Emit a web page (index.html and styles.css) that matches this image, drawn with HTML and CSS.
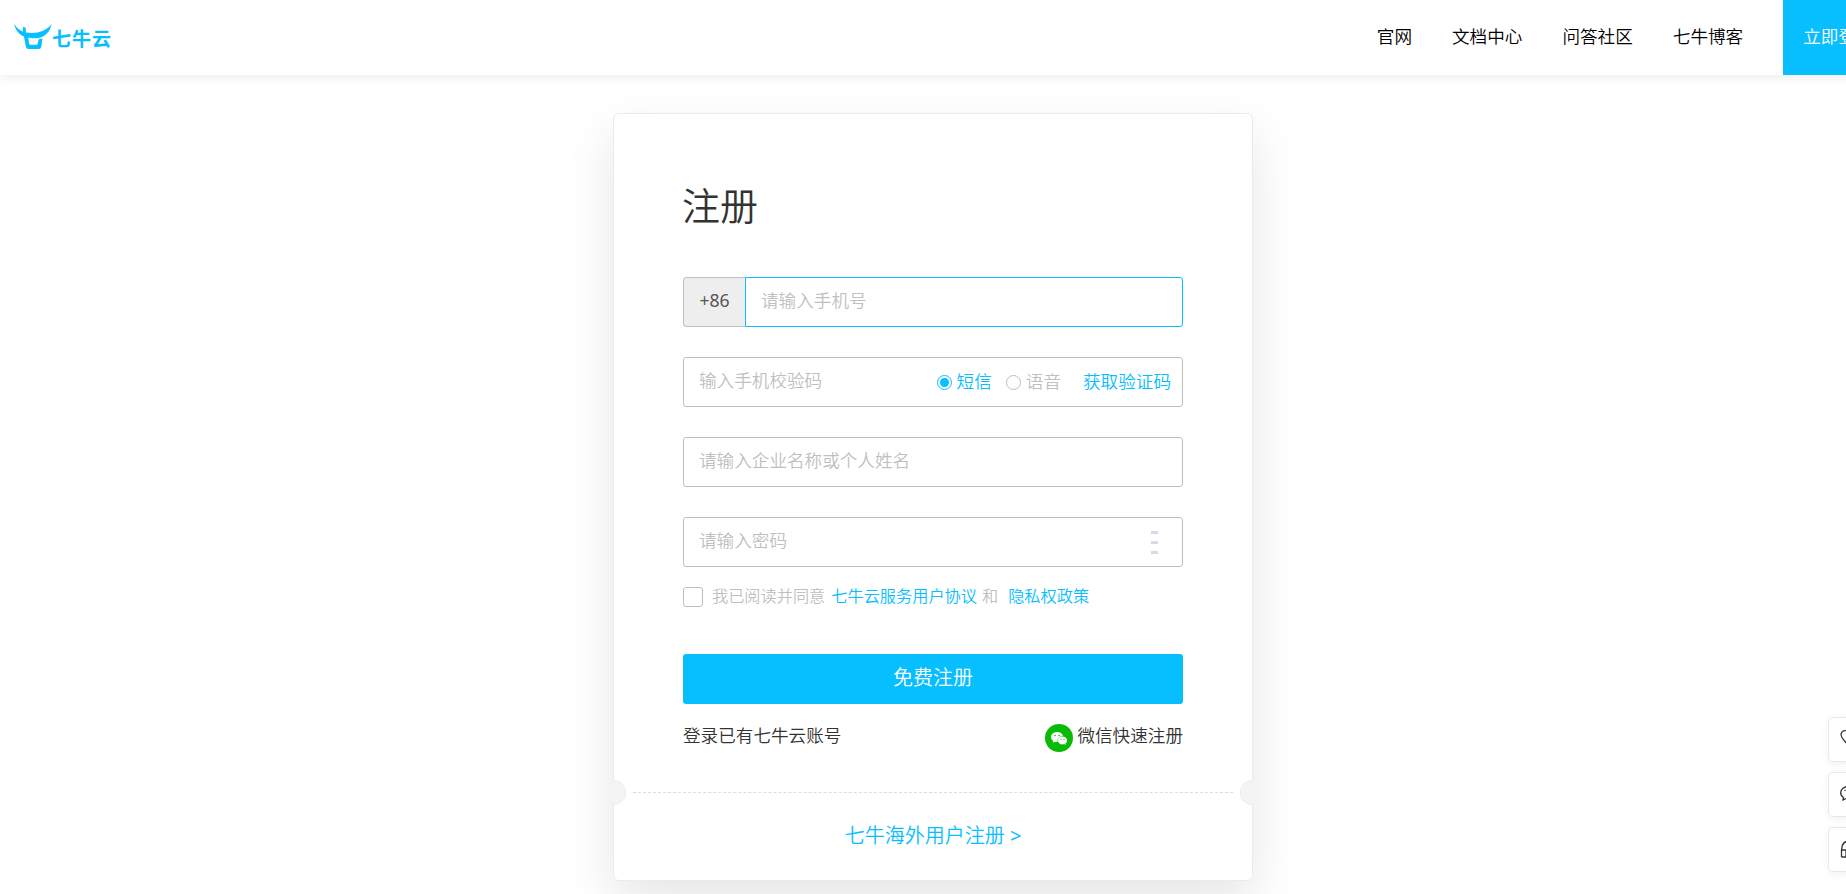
FILE: index.html
```html
<!DOCTYPE html>
<html lang="zh-CN">
<head>
    <meta charset="UTF-8">
    <meta name="viewport" content="width=device-width, initial-scale=1.0">
    <title>注册 - 七牛云</title>
    <link rel="stylesheet" href="styles.css">
</head>
<body>

<!-- Header -->
<header class="header">
    <a class="logo" href="#">
        <svg class="logo-icon" width="38" height="26" viewBox="0 0 38 26">
            <path d="M0 0C3 4 6 6.500 9 7.800L9 3L11.600 3.500L12 8.500C22 10 32 7.500 37.600 0C36 8 31 12.800 24 14C20 14.500 17 14.200 14.200 13.500L15.200 19.500Q15.400 20.700 16.500 20.700H22Q23.500 20.700 23.700 19.500L24.300 16.500Q24.700 14.500 28.500 14.500L27.300 22.500Q26.800 25 24.800 25H14.500Q12.300 25 11.800 22.500L10 12.500C5 10.500 1.500 6 0 0Z"/>
        </svg>
        <span class="logo-text">七牛云</span>
    </a>
    <nav class="nav">
        <a href="#">官网</a>
        <a href="#">文档中心</a>
        <a href="#">问答社区</a>
        <a href="#">七牛博客</a>
        <a class="login-btn" href="#">立即登录</a>
    </nav>
</header>

<!-- Register card -->
<main class="card">
    <form class="form">
        <h1>注册</h1>
        <div class="field phone">
            <span class="prefix">+86</span>
            <input type="text" placeholder="请输入手机号">
        </div>
        <div class="field">
            <input type="text" placeholder="输入手机校验码">
            <label class="radio checked"><i></i><span>短信</span></label>
            <label class="radio"><i></i><span>语音</span></label>
            <a class="get-code" href="#">获取验证码</a>
        </div>
        <div class="field">
            <input type="text" placeholder="请输入企业名称或个人姓名">
        </div>
        <div class="field">
            <input type="password" placeholder="请输入密码">
            <div class="strength"><i></i><i></i><i></i></div>
        </div>
        <div class="agreement">
            <span class="checkbox"></span>
            <span>我已阅读并同意</span>
            <a class="terms" href="#">七牛云服务用户协议</a>
            <span>和</span>
            <a class="privacy" href="#">隐私权政策</a>
        </div>
        <button class="submit" type="button">免费注册</button>
        <div class="links">
            <a href="#">登录已有七牛云账号</a>
            <a class="wechat" href="#">
                <svg width="28" height="28" viewBox="0 0 28 28">
                    <circle cx="14" cy="14" r="14" fill="#09bb07"/>
                    <path fill="#fff" d="M12 8C8.700 8 6 10.200 6 13C6 14.600 6.900 15.900 8.200 16.900L7.700 18.800L9.900 17.700C10.800 18 11.700 18.100 12.600 18C11.900 14.800 14.500 12 18 12C17.500 9.600 15 8 12 8Z"/>
                    <path fill="#fff" d="M22 16.400C22 14.200 19.900 12.500 17.500 12.500C14.900 12.500 12.900 14.200 12.900 16.400C12.900 18.700 14.900 20.400 17.500 20.400C18.100 20.400 18.700 20.300 19.200 20.100L20.900 21L20.400 19.500C21.400 18.700 22 17.600 22 16.400Z"/>
                    <g fill="#09bb07">
                        <circle cx="10" cy="11.500" r=".8"/>
                        <circle cx="14" cy="11.500" r=".8"/>
                        <circle cx="16" cy="15.300" r=".6"/>
                        <circle cx="19" cy="15.300" r=".6"/>
                    </g>
                </svg>
                微信快速注册
            </a>
        </div>
    </form>
    <div class="divider">
        <span class="notch notch-left"></span>
        <span class="dashes"></span>
        <span class="notch notch-right"></span>
    </div>
    <a class="overseas" href="#">七牛海外用户注册 <span>&gt;</span></a>
</main>

<!-- Floating tools -->
<aside class="tools">
    <a href="#">
        <svg width="22" height="22" viewBox="0 0 22 22"><path d="M4.500 12C2 9 .5 7 1.200 4.500C2 2 4.500 1 7 2C9 3 10 4 11 5C12 3 15 1 18 2C21 3 21.500 7 19 10L11 19Z"/></svg>
    </a>
    <a href="#">
        <svg width="22" height="22" viewBox="0 0 22 22"><path d="M16 7C15 4 12 2.500 8.500 2.500C4 2.500 .7 5 .7 8.700C.7 11 1.800 12.500 3.500 13.500L3 16L6 14.700M5 5.700V7M10 5.700V7M8 12A6 5 0 1 0 20 12A6 5 0 1 0 8 12"/></svg>
    </a>
    <a href="#">
        <svg width="22" height="22" viewBox="0 0 22 22"><path d="M1.500 18V11C1.500 5 5 1.500 11 1.500S20.500 5 20.500 11V18H15.500V11H20.500M1.500 11H6V18H1.500"/></svg>
    </a>
</aside>

</body>
</html>
```
FILE: styles.css
```css
* {
    box-sizing: border-box;
    margin: 0;
    padding: 0;
}

html {
    overflow: hidden;
}

body {
    width: 1866px;
    height: 894px;
    overflow: hidden;
    background-color: #fff;
    color: #333;
    font-family: "Noto Sans", "Noto Sans CJK SC", sans-serif;
    font-size: 17.6px;
    font-weight: 350;
}

a {
    color: inherit;
    text-decoration: none;
}

/* Header */
.header {
    display: flex;
    justify-content: space-between;
    height: 75px;
    padding-left: 14px;
    box-shadow: 0 2px 12px rgba(0, 0, 0, 0.08);
}

.logo {
    display: flex;
    height: 26px;
    margin-top: 24px;
    color: #07beff;
}

.logo-icon {
    fill: #07beff;
}

.logo-text {
    margin-top: 2px;
    font-size: 19px;
    font-weight: 700;
    line-height: 26px;
    letter-spacing: 1px;
}

.nav {
    display: flex;
    flex: none;
    gap: 40px;
    width: 489.2px;
    color: #000;
    line-height: 73px;
    white-space: nowrap;
}

.nav a {
    flex: none;
}

.login-btn {
    height: 75px;
    padding: 0 20px;
    background-color: #07beff;
    color: #fff;
}

/* Card */
.card {
    width: 640px;
    height: 768px;
    margin: 38px auto 0;
    border: 1px solid #ebebeb;
    border-radius: 6px;
    background-color: #fff;
    box-shadow: 0 20px 50px rgba(0, 0, 0, 0.1);
}

.form {
    height: 665px;
    padding: 61px 69px 0;
}

h1 {
    height: 102px;
    font-size: 38px;
    font-weight: 350;
    line-height: 60px;
    text-indent: -1px;
}

.field {
    display: flex;
    align-items: center;
    height: 50px;
    margin-bottom: 30px;
    padding-right: 11px;
    border: 1px solid #bfbfbf;
    border-radius: 3px;
}

.field input {
    flex: 1;
    min-width: 0;
    height: 48px;
    padding: 0 15px 4px;
    border: 0;
    outline: none;
    background: none;
    font: inherit;
}

.field input::placeholder {
    color: #bfbfbf;
    opacity: 1;
}

.phone {
    padding: 0;
    border: 0;
}

.prefix {
    width: 62px;
    height: 50px;
    border: 1px solid #bfbfbf;
    border-right: 0;
    border-radius: 4px 0 0 4px;
    background-color: #eee;
    color: #555;
    font-weight: 400;
    line-height: 45px;
    text-align: center;
}

.phone input {
    height: 50px;
    border: 1px solid #07beff;
    border-radius: 0 3px 3px 0;
}

.radio {
    display: flex;
    align-items: center;
    margin-right: 14px;
    color: #bfbfbf;
}

.radio span,
.get-code {
    padding-bottom: 3px;
}

.radio i {
    width: 15px;
    height: 15px;
    margin-right: 5px;
    border: 1px solid #bfbfbf;
    border-radius: 50%;
}

.radio.checked,
.get-code {
    color: #07beff;
}

.radio.checked i {
    padding: 2px;
    border-color: #07beff;
    background-color: #07beff;
    background-clip: content-box;
}

.get-code {
    margin-left: 8px;
}

.strength {
    display: flex;
    flex-direction: column;
    gap: 7px;
    margin-right: 13px;
}

.strength i {
    width: 7px;
    height: 3px;
    background-color: #d8dbe6;
}

.agreement {
    display: flex;
    align-items: center;
    height: 20px;
    margin-top: -10px;
    color: #bfbfbf;
    font-size: 16.2px;
    line-height: 20px;
}

.agreement span,
.agreement a {
    padding-bottom: 2px;
}

.agreement a {
    color: #07beff;
}

.checkbox {
    width: 20px;
    height: 20px;
    margin-right: 9px;
    border: 1px solid #bfbfbf;
    border-radius: 3px;
}

.terms {
    margin: 0 5px 0 6px;
}

.privacy {
    margin-left: 10px;
}

.submit {
    display: block;
    width: 500px;
    height: 50px;
    margin-top: 47px;
    padding-bottom: 5px;
    border: 0;
    border-radius: 3px;
    background-color: #07beff;
    color: #fff;
    font: inherit;
    font-size: 20px;
}

.links {
    display: flex;
    justify-content: space-between;
    height: 28px;
    margin-top: 20px;
    line-height: 23px;
}

.wechat {
    display: flex;
    gap: 4px;
}

/* Ticket style divider */
.divider {
    display: flex;
    align-items: center;
    justify-content: space-between;
    height: 26px;
    margin: 0 -1px;
}

.notch {
    width: 13px;
    height: 25px;
    border: 1px solid #ebebeb;
    background-color: #f4f4f4;
}

.notch-left {
    border-left: 0;
    border-radius: 0 13px 13px 0;
}

.notch-right {
    border-right: 0;
    border-radius: 13px 0 0 13px;
}

.dashes {
    width: 600px;
    border-top: 1px dashed #ddd;
}

.overseas {
    display: block;
    margin-top: 16px;
    color: #07beff;
    font-size: 20px;
    line-height: 30px;
    text-align: center;
}

.overseas span {
    font-weight: 400;
}

/* Floating tools */
.tools {
    position: fixed;
    top: 717px;
    left: 1828px;
    display: flex;
    flex-direction: column;
    gap: 10px;
}

.tools a {
    width: 45px;
    height: 45px;
    padding: 11px;
    border: 1px solid #e3eaf2;
    border-radius: 5px;
    background-color: #fff;
    box-shadow: 0 2px 8px rgba(0, 0, 0, 0.06);
}

.tools svg {
    display: block;
    fill: none;
    stroke: #333;
    stroke-width: 1.300;
}
```
